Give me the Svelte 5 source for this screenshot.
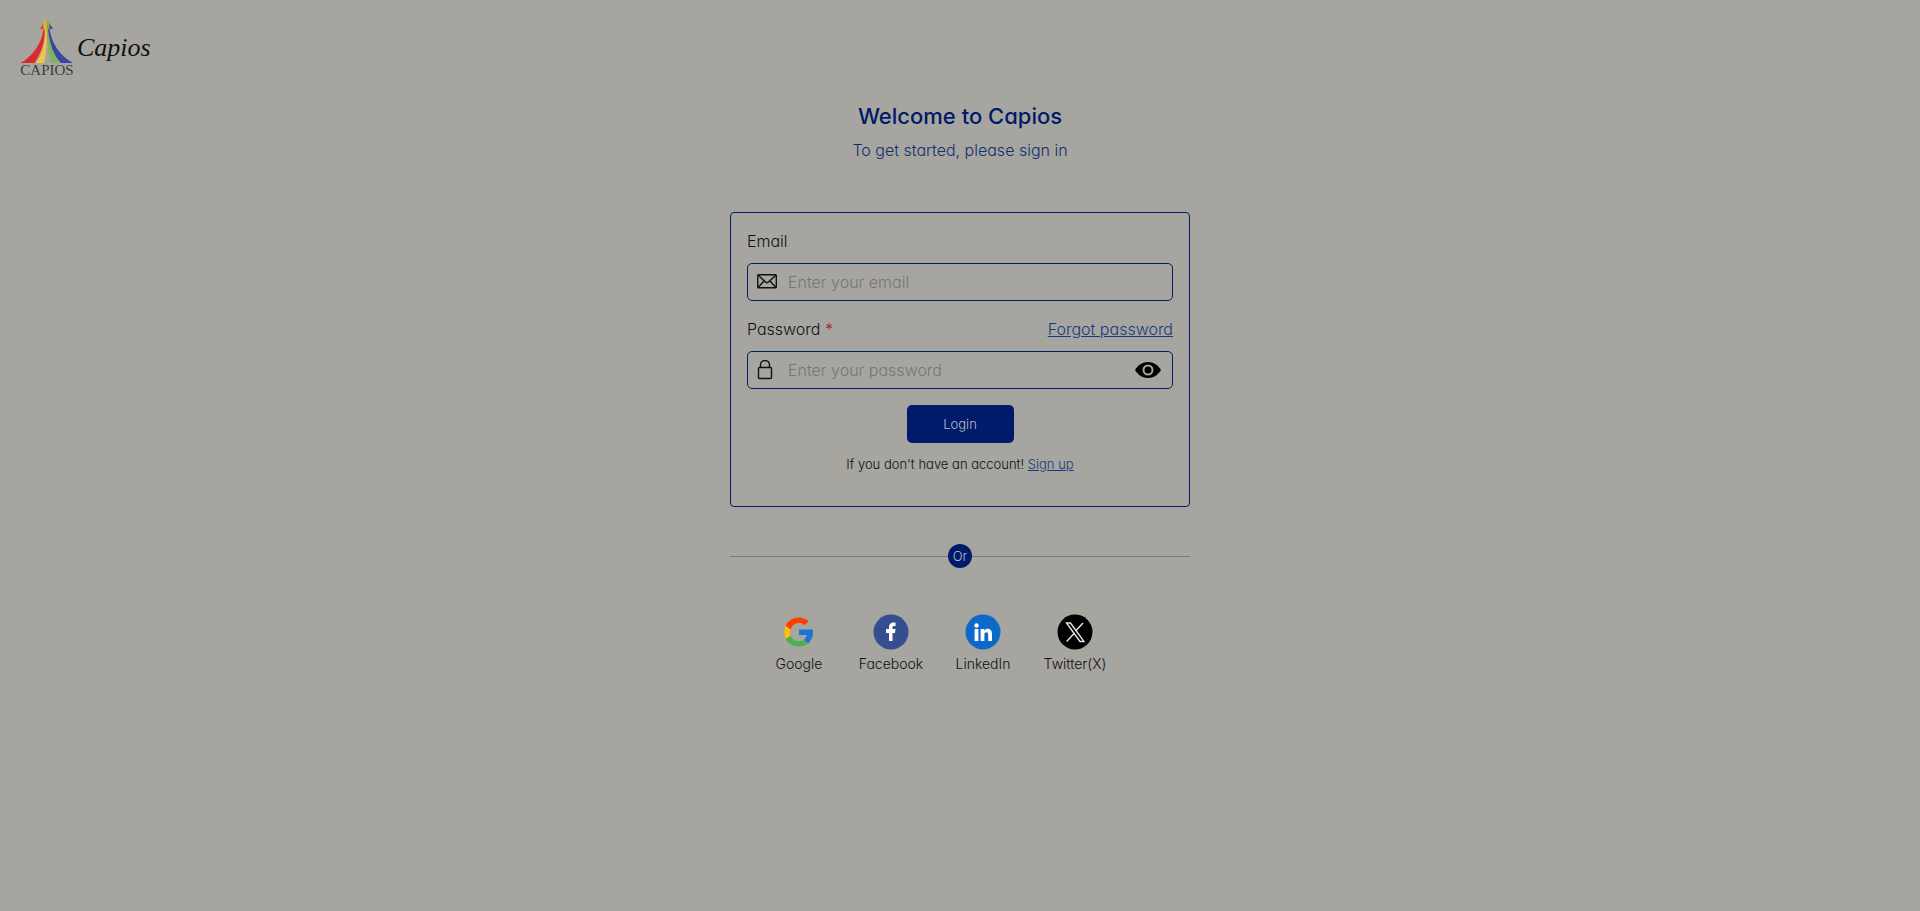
<script lang="ts">
  let email = "";
  let password = "";
  let showPassword = false;

  const providers = [
    { id: "google", name: "Google" },
    { id: "facebook", name: "Facebook" },
    { id: "linkedin", name: "LinkedIn" },
    { id: "twitter", name: "Twitter(X)" },
  ];

  function togglePassword() {
    showPassword = !showPassword;
  }

  function handleSubmit(e: Event) {
    e.preventDefault();
  }
</script>

<div class="page">
  <header class="header">
    <a class="logo" href="/">
      <span class="emblem">
        <svg class="tent" viewBox="0 0 54 44" aria-hidden="true">
          <path d="M23.500 9C22.500 24 12 38 0.500 44H14.500C20 36 25 24 25.500 9Z" fill="#dc2a2c" />
          <path d="M24.500 9C26 24 22 37 15.500 44H24C26.500 32 27.500 22 26.500 9Z" fill="#f6c244" />
          <path d="M26.500 9C27 23 29 35 31 44H39C32 33 28.500 22 28 9Z" fill="#7fb35c" />
          <path d="M28 9C29 23 33 36 41 44H53C40 37 31 24 29.500 9Z" fill="#354a9c" />
          <path d="M20 10L26.500 0V10Z" fill="#e8b53a" />
          <path d="M33 10L26.500 0V10Z" fill="#9ba344" />
          <path d="M20 10L23.500 4.500V10Z" fill="#d9452b" />
          <path d="M33 10L29.500 4.500V10Z" fill="#354a9c" />
        </svg>
        <span class="emblem-name">CAPIOS</span>
      </span>
      <span class="script-name">Capios</span>
    </a>
  </header>

  <main class="content">
    <h1>Welcome to Capios</h1>
    <p class="subtitle">To get started, please sign in</p>

    <form class="card" on:submit={handleSubmit}>
      <div class="label-row">
        <label for="email">Email</label>
      </div>
      <div class="field">
        <svg class="field-icon" viewBox="0 0 20 20" aria-hidden="true">
          <rect x="0.700" y="2.700" width="18.600" height="13" rx="1" />
          <path d="M1 3L8.500 10Q10 11.400 11.500 10L19 3M1 15.500L7 9M19 15.500L13 9" />
        </svg>
        <input id="email" type="email" placeholder="Enter your email" bind:value={email} />
      </div>

      <div class="label-row">
        <label for="password">Password <span class="required">*</span></label>
        <a href="/forgot-password">Forgot password</a>
      </div>
      <div class="field">
        <svg class="field-icon" viewBox="0 0 20 20" aria-hidden="true">
          <rect x="1.500" y="7.500" width="13" height="11" rx="1" />
          <path d="M3.500 7.500V5C3.500 -1 12.500 -1 12.500 5V7.500" />
        </svg>
        <input
          id="password"
          type={showPassword ? "text" : "password"}
          placeholder="Enter your password"
          bind:value={password}
        />
        <button class="toggle" type="button" aria-label="Show password" on:click={togglePassword}>
          <svg viewBox="0 0 26 16" aria-hidden="true">
            <path d="M0 8C3 3 7.500 0 13 0S23 3 26 8C23 13 18.500 16 13 16S3 13 0 8Z" />
            <circle class="iris" cx="13" cy="8" r="4.500" />
          </svg>
        </button>
      </div>

      <button class="login" type="submit">Login</button>
      <p class="signup">If you don't have an account! <a href="/signup">Sign up</a></p>
    </form>

    <div class="divider"><span>Or</span></div>

    <div class="providers">
      {#each providers as provider (provider.id)}
        <button class="provider" type="button">
          <svg viewBox="0 0 36 36" aria-hidden="true">
            {#if provider.id === "google"}
              <g transform="translate(3.500 3.500) scale(0.605)">
                <path d="M47 20H24v9h13c-1 4-3 6-5 8l7 6c6-5 9-13 8-23Z" fill="#1976d2" />
                <path d="M2 14l8 6C13 12 18 9 24 9c4 0 7 1 9 4l7-7C35 2 30 0 24 0 14 0 6 5 2 14Z" fill="#ff3d00" />
                <path d="M24 48c6 0 11-2 15-5l-7-6c-8 5-18 2-22-7l-8 5c4 8 12 13 22 13Z" fill="#4caf50" />
                <path d="M2 14c-3 7-3 14 0 21l8-5c-2-4-2-7 0-10Z" fill="#ffc107" />
              </g>
            {:else if provider.id === "facebook"}
              <circle cx="18" cy="18" r="17.500" fill="#344e8e" />
              <path d="M16 27V19h-3v-4h3v-2c0-3 2-4.500 4-4.500h2.500V12H21c-1 0-1.500.5-1.500 1.500V15h3l-.5 4h-2.500v8Z" fill="#fff" />
            {:else if provider.id === "linkedin"}
              <circle cx="18" cy="18" r="17.500" fill="#0b69c7" />
              <circle cx="11.500" cy="11.500" r="2.200" fill="#fff" />
              <path d="M9.600 15h3.800v12H9.600ZM15.600 15h3.600v1.600c2-3 7.800-2.600 7.800 3.400v7h-3.800v-6.500c0-3-3.800-3-3.800 0V27h-3.800Z" fill="#fff" />
            {:else}
              <circle cx="18" cy="18" r="17.500" fill="#000" />
              <path d="M9.500 9h4L27 27.500h-4ZM26 9l-7.300 8M17 19.500l-7.300 8" fill="none" stroke="#e4e4e4" stroke-width="1.400" />
            {/if}
          </svg>
          <span>{provider.name}</span>
        </button>
      {/each}
    </div>
  </main>
</div>

<style>
  :global(body) {
    margin: 0;
    background: #a6a5a0;
  }

  .page {
    min-height: 100vh;
    box-sizing: border-box;
    font-family: Inter, "Open Sans", sans-serif;
    font-feature-settings: "cv11";
    font-size: 16px;
    font-weight: 300;
    line-height: 24px;
    color: #111;
  }

  .header {
    display: flex;
    padding: 20px 20px 0;
  }

  .logo {
    display: flex;
    align-items: center;
    gap: 3px;
    height: 56px;
    color: #111;
    text-decoration: none;
    font-family: "Liberation Serif", serif;
    font-weight: 400;
  }

  .emblem {
    display: flex;
    flex-direction: column;
    align-items: center;
  }

  .tent {
    width: 54px;
    height: 44px;
  }

  .emblem-name {
    font-size: 15px;
    line-height: 14px;
    color: #3c3c3c;
  }

  .script-name {
    font-size: 26px;
    line-height: 56px;
    font-style: italic;
  }

  .content {
    width: 460px;
    max-width: calc(100% - 32px);
    margin: 24px auto 0;
  }

  h1 {
    margin: 0;
    font-size: 22px;
    font-weight: 500;
    line-height: 32px;
    text-align: center;
    color: #001b68;
  }

  .subtitle {
    margin: 6px 0 50px;
    text-align: center;
    color: #123070;
  }

  .card {
    box-sizing: border-box;
    padding: 16px 16px 30px;
    border: 1px solid #00205f;
    border-radius: 4px;
  }

  .label-row {
    display: flex;
    justify-content: space-between;
    margin-bottom: 10px;
  }

  .required {
    color: #a51a2a;
  }

  a {
    color: #153c80;
  }

  .field {
    display: flex;
    align-items: center;
    box-sizing: border-box;
    height: 38px;
    margin-bottom: 16px;
    padding: 0 11px 0 9px;
    border: 1px solid #00205f;
    border-radius: 5px;
  }

  .field-icon {
    flex: none;
    width: 20px;
    height: 20px;
    fill: none;
    stroke: #111;
    stroke-width: 1.4;
  }

  .field input {
    flex: 1;
    min-width: 0;
    padding: 0 11px;
    border: 0;
    outline: none;
    background: transparent;
    color: #111;
    font: inherit;
    font-feature-settings: inherit;
  }

  .field input::placeholder {
    color: #777773;
  }

  button {
    padding: 0;
    border: 0;
    background: transparent;
    color: inherit;
    font: inherit;
    font-feature-settings: inherit;
    cursor: pointer;
  }

  .toggle {
    display: flex;
  }

  .toggle svg {
    width: 26px;
    height: 16px;
  }

  .iris {
    stroke: #a6a5a0;
    stroke-width: 2;
  }

  .login {
    display: block;
    width: 107px;
    height: 38px;
    margin: 0 auto;
    border-radius: 5px;
    background: #001b6b;
    color: #b9bbc2;
    font-size: 13px;
  }

  .signup {
    margin: 9px 0 0;
    font-size: 13px;
    text-align: center;
  }

  .divider {
    display: flex;
    align-items: center;
    margin: 37px 0 46px;
  }

  .divider::before,
  .divider::after {
    content: "";
    flex: 1;
    height: 1px;
    background: #7b7a77;
  }

  .divider span {
    width: 24px;
    height: 24px;
    border-radius: 50%;
    background: #001b6b;
    color: #b9bbc2;
    font-size: 13px;
    text-align: center;
  }

  .providers {
    display: grid;
    grid-template-columns: repeat(4, 1fr);
    width: 80%;
    margin-left: 5%;
  }

  .provider {
    display: flex;
    flex-direction: column;
    align-items: center;
    gap: 2px;
    font-size: 14px;
  }

  .provider svg {
    width: 36px;
    height: 36px;
  }
</style>
